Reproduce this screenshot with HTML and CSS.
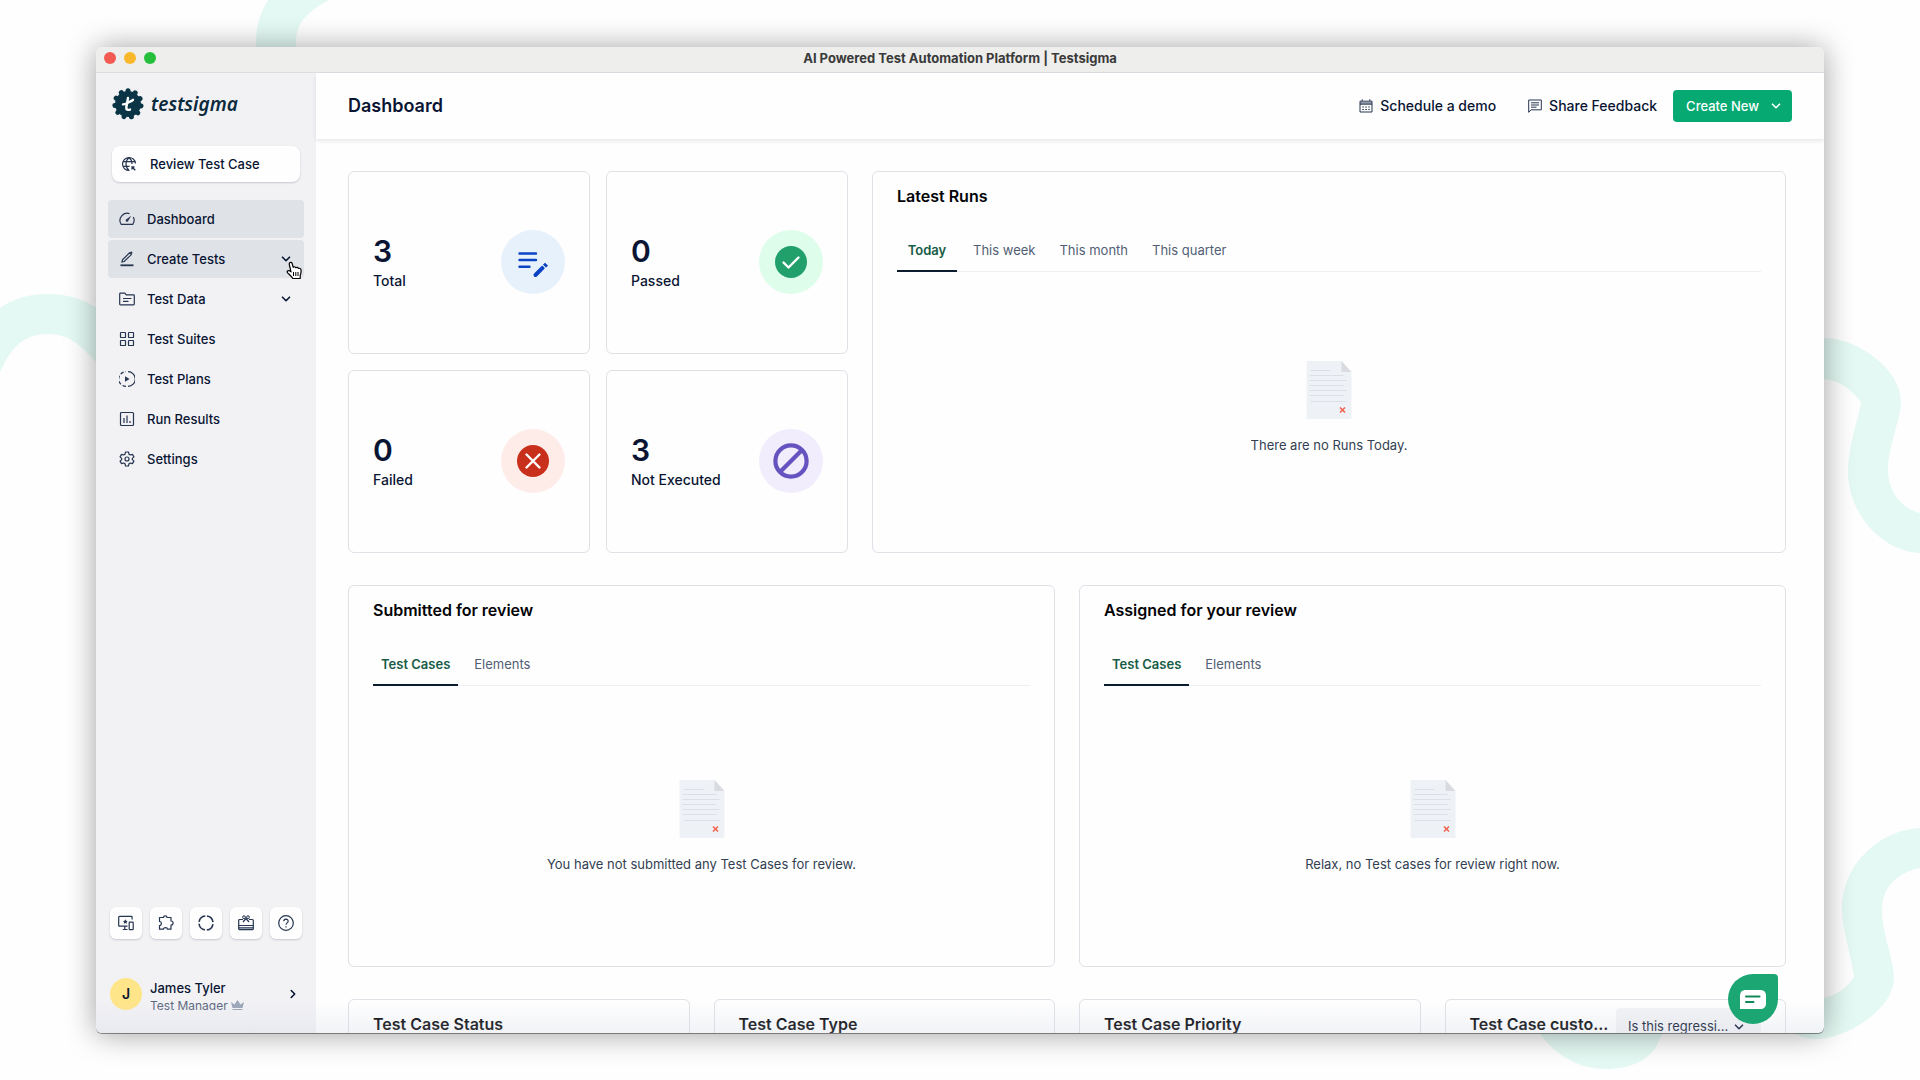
FILE: index.html
```html
<!DOCTYPE html>
<html lang="en">
<head>
    <meta charset="UTF-8">
    <meta name="viewport" content="width=device-width, initial-scale=1.0">
    <title>AI Powered Test Automation Platform | Testsigma</title>
    <link rel="stylesheet" href="styles.css">
</head>
<body>
    <!-- Background ribbons -->
    <svg class="ribbons" viewBox="0 0 1920 1080" preserveAspectRatio="none" aria-hidden="true">
        <path d="M0 308C14 298 31 294 48 294C68 294 84 299 100 310V365C84 352 75 334 48 334C22 334 10 350 0 372Z"/>
        <path d="M256 60V42C256 26 260 13 268 0H329C312 9 296 20 296 42V60Z"/>
        <path d="M1810 338H1824C1858 338 1901 370 1901 401C1901 420 1888 445 1888 470C1888 490 1900 508 1920 513V553C1880 551 1848 512 1848 472C1848 448 1858 420 1861 402C1850 388 1838 380 1824 379H1810Z"/>
        <path d="M1920 828C1880 830 1842 864 1842 909C1842 928 1850 950 1854 977C1846 989 1836 995 1824 998L1790 1030C1799 1037 1808 1039 1818 1039C1846 1039 1894 1009 1894 978C1894 960 1882 934 1882 910C1882 886 1899 872 1920 868Z"/>
        <path d="M1535 1025C1549 1052 1577 1069 1605 1069C1632 1069 1651 1059 1658 1043C1660 1038 1663 1033 1666 1025Z"/>
    </svg>

    <!-- Shared drawings -->
    <svg class="symbols" aria-hidden="true">
        <symbol id="empty-doc" viewBox="0 0 45 58">
            <path d="M0 0H35L45 11V58H0Z" fill="#eef1f5"/>
            <path d="M35 0L45 11H35Z" fill="#d9dbe0"/>
            <g stroke="#dcdfe5" stroke-width="1">
                <path d="M4 9.500H24M3 14.500H37M3 19.500H40M3 24.500H37M3 29.500H40M3 34.500H37M4 40.500H40"/>
            </g>
            <path d="M33.500 46.500L38.500 51.500M38.500 46.500L33.500 51.500" stroke="#f0604d" stroke-width="1.500"/>
        </symbol>
        <symbol id="chevron" viewBox="0 0 10 10">
            <path d="M1.500 3.200L5 6.700L8.500 3.200" fill="none" stroke="currentColor" stroke-width="1.600" stroke-linecap="round" stroke-linejoin="round"/>
        </symbol>
    </svg>

    <div class="window">
        <div class="titlebar">
            <div class="lights">
                <span class="light light-red"></span>
                <span class="light light-yellow"></span>
                <span class="light light-green"></span>
            </div>
            <div class="window-title">AI Powered Test Automation Platform | Testsigma</div>
        </div>

        <div class="app">
            <!-- Sidebar -->
            <aside class="sidebar">
                <a class="logo" href="#">
                    <svg width="32" height="32" viewBox="0 0 32 32">
                        <circle cx="16" cy="16" r="13" fill="#0b3547"/>
                        <circle cx="16" cy="16" r="13.200" fill="none" stroke="#0b3547" stroke-width="5" stroke-linecap="round" stroke-dasharray="0.010 7.530" transform="rotate(-90 16 16)"/>
                        <path d="M16 10L15.200 14.500L14.300 19.500C14.100 21.800 16 22.200 18 21.600M11 16.400C14 16.600 16 14.600 17.500 13.800C19 13.200 20 12.800 21 11.800" fill="none" stroke="#fff" stroke-width="2.400" stroke-linecap="round"/>
                    </svg>
                    <span class="logo-name">testsigma</span>
                </a>

                <button class="review-btn" type="button">
                    <svg class="icon" viewBox="0 0 16 16">
                        <path d="M14.500 7.500A6.500 6.500 0 1 0 8.500 14.500M1.700 5.700H14.200M1.700 10.300H8.500M8 1.500C4 5 4 11 8 14.500M8 1.500C10.200 3.300 11 5.500 11 8"/>
                        <path d="M11 13.500V11H13.500M11.300 11.300L14.300 14.300" stroke-width="1.300"/>
                    </svg>
                    Review Test Case
                </button>

                <nav class="nav">
                    <a class="nav-item active" href="#">
                        <svg class="icon" viewBox="0 0 16 16"><path d="M10.500 2.600A7.200 7.200 0 0 0 2.200 13.400H13.800A7.200 7.200 0 0 0 14.300 6"/><path d="M12.200 4.800L9 10.300A1.300 1.300 0 0 1 7 8.600Z" fill="currentColor" stroke="none"/></svg>
                        <span>Dashboard</span>
                    </a>
                    <a class="nav-item active" href="#">
                        <svg class="icon" viewBox="0 0 16 16"><path d="M1.500 14.300H14.500" stroke-width="1.800"/><path d="M3 11L3.500 8.800L10.500 1.800L12.300 3.600L5.200 10.500Z"/><path d="M11.500 1L13 2.500" stroke-width="2"/></svg>
                        <span>Create Tests</span>
                        <svg class="chevron" viewBox="0 0 10 10"><use href="#chevron"/></svg>
                    </a>
                    <a class="nav-item" href="#">
                        <svg class="icon" viewBox="0 0 16 16"><path d="M.7 13V3C.7 2.500 1 2.200 1.500 2.200H5.800L7.300 3.800H14.500C15 3.800 15.300 4.100 15.300 4.600V13C15.300 13.500 15 13.800 14.500 13.800H1.500C1 13.800 .7 13.500 .7 13ZM4 7.500H12.500M4 10.300H9.500"/></svg>
                        <span>Test Data</span>
                        <svg class="chevron" viewBox="0 0 10 10"><use href="#chevron"/></svg>
                    </a>
                    <a class="nav-item" href="#">
                        <svg class="icon" viewBox="0 0 16 16"><rect x="1.500" y="1.500" width="5" height="5" rx=".6"/><rect x="9.500" y="1.500" width="5" height="5" rx=".6"/><rect x="1.500" y="9.500" width="5" height="5" rx=".6"/><rect x="9.500" y="9.500" width="5" height="5" rx=".6"/></svg>
                        <span>Test Suites</span>
                    </a>
                    <a class="nav-item" href="#">
                        <svg class="icon" viewBox="0 0 16 16"><path d="M9 .7A7.300 7.300 0 0 1 9 15.300"/><path d="M7 15.300A7.300 7.300 0 0 1 7 .7" stroke-dasharray="3.600 2"/><path d="M6 5.200L10.600 8L6 10.800Z" fill="currentColor" stroke="none"/></svg>
                        <span>Test Plans</span>
                    </a>
                    <a class="nav-item" href="#">
                        <svg class="icon" viewBox="0 0 16 16"><rect x="1.500" y="1.500" width="13" height="13" rx="1"/><path d="M5 7V12M8 4.500V12M11 10V12"/></svg>
                        <span>Run Results</span>
                    </a>
                    <a class="nav-item" href="#">
                        <svg class="icon" viewBox="0 0 24 24"><g stroke-width="1.800"><circle cx="12" cy="12" r="3"/><path d="M9.800 1.500H14.200L14.900 4.700L17.100 6L20.200 5L22.400 8.800L20 11V13L22.400 15.200L20.200 19L17.100 18L14.900 19.300L14.200 22.500H9.800L9.100 19.300L6.900 18L3.800 19L1.600 15.200L4 13V11L1.600 8.800L3.800 5L6.900 6L9.100 4.700Z" stroke-linejoin="round"/></g></svg>
                        <span>Settings</span>
                    </a>
                </nav>

                <div class="tools">
                    <button class="tool" type="button" aria-label="Devices">
                        <svg class="icon" viewBox="0 0 16 16"><path d="M9.500 11.200H1.500C1 11.200 .7 10.900 .7 10.400V2.200C.7 1.700 1 1.400 1.500 1.400H13.300C13.800 1.400 14.100 1.700 14.100 2.200V4.500M6.800 11.200V14.300M4.800 14.500H9.500"/><rect x="11.200" y="7.200" width="4" height="7.500" rx=".6"/><path d="M7.300 4.200L8.100 5.800L9.800 6L8.500 7.100L8.900 8.800L7.300 7.900L5.800 8.800L6.100 7.100L4.900 6L6.600 5.800Z" fill="currentColor" stroke="none"/></svg>
                    </button>
                    <button class="tool" type="button" aria-label="Add-ons">
                        <svg class="icon" viewBox="0 0 16 16"><path d="M1.500 2.500H5.500C5.500 .3 9 .3 9 2.500H13V6C15.800 6 15.800 10 13 10V14.200H9.500C9.500 12 5.500 12 5.500 14.200H1.500V10.500C4 10.500 4 6.500 1.500 6.500Z" stroke-linejoin="round"/></svg>
                    </button>
                    <button class="tool" type="button" aria-label="Usage">
                        <svg class="icon" viewBox="0 0 16 16"><circle cx="8" cy="8" r="7" stroke-width="1.600" stroke-dasharray="9 2" transform="rotate(-82 8 8)"/></svg>
                    </button>
                    <button class="tool" type="button" aria-label="What's new">
                        <svg class="icon" viewBox="0 0 16 16"><path d="M5 4.500H1.700C1.100 4.500 .7 4.900 .7 5.500V13.700C.7 14.300 1.100 14.700 1.700 14.700H14.300C14.900 14.700 15.300 14.300 15.300 13.700V5.500C15.300 4.900 14.900 4.500 14.300 4.500H11"/><path d="M.7 10.500H15.300M.7 12.800H15.300"/><path d="M5 7L8 3.500L11 7"/><circle cx="6" cy="2.200" r="1.400" stroke-width="1"/><circle cx="10" cy="2.200" r="1.400" stroke-width="1"/></svg>
                    </button>
                    <button class="tool" type="button" aria-label="Help">
                        <svg class="icon" viewBox="0 0 16 16"><circle cx="8" cy="8" r="7.300"/><path d="M5.800 6.300C5.800 3.400 10.300 3.500 10.200 6.200C10.100 7.800 8 8 8 9.800M8 11.200V12.500"/></svg>
                    </button>
                </div>

                <a class="profile" href="#">
                    <span class="avatar">J</span>
                    <span class="profile-text">
                        <span class="profile-name">James Tyler</span>
                        <span class="profile-role">Test Manager
                            <svg width="13" height="10" viewBox="0 0 13 10"><path d="M0 2L3.500 4.500L6.500 0L9.500 4.500L13 2L11.500 8H1.500ZM1.500 9H11.500V10H1.500Z" fill="#9aa6b8"/></svg>
                        </span>
                    </span>
                    <svg class="chevron side" viewBox="0 0 10 10"><use href="#chevron"/></svg>
                </a>
            </aside>

            <!-- Main column -->
            <main class="main">
                <header class="header">
                    <h1>Dashboard</h1>
                    <div class="actions">
                        <a class="action" href="#">
                            <svg class="icon-sm" viewBox="0 0 14 14"><path d="M1 2.200H13V13H1ZM1 4H13M1 5.200H13M3.200 .3V2M10.800 .3V2"/><path d="M3.300 8H11M3.300 10.500H11" stroke-dasharray="1.500 1.500"/></svg>
                            Schedule a demo
                        </a>
                        <a class="action" href="#">
                            <svg class="icon-sm" viewBox="0 0 14 14"><path d="M.7 13.300V1H13.300V10.800H3ZM3 3.800H11M3 6H11M3 8.200H8.500"/></svg>
                            Share Feedback
                        </a>
                        <button class="create-btn" type="button">Create New
                            <svg class="chevron" viewBox="0 0 10 10"><use href="#chevron"/></svg>
                        </button>
                    </div>
                </header>

                <div class="content">
                    <!-- Counters and latest runs -->
                    <div class="row row-top">
                        <div class="stats">
                            <div class="card stat">
                                <div><div class="stat-value">3</div><div class="stat-label">Total</div></div>
                                <div class="stat-icon blue">
                                    <svg width="32" height="32" viewBox="0 0 32 32"><path d="M2.500 7.500H19M2.500 14H19M2.500 20.800H12.500" stroke="#0a44c4" stroke-width="2.400" stroke-linecap="round"/><path d="M18.500 29L25.800 21.700" stroke="#0a44c4" stroke-width="4" stroke-linecap="round"/><path d="M26 19.200L28 17.200L30.500 19.700L28.500 21.700Z" fill="#0a44c4" stroke="#0a44c4" stroke-linejoin="round"/><path d="M24.500 17.800L30 23.300" stroke="#e7f1fc" stroke-width="1.200"/></svg>
                                </div>
                            </div>
                            <div class="card stat">
                                <div><div class="stat-value">0</div><div class="stat-label">Passed</div></div>
                                <div class="stat-icon green">
                                    <svg width="32" height="32" viewBox="0 0 32 32"><circle cx="16" cy="16" r="16" fill="#22a06b"/><path d="M8.500 16.500L13.500 21.500L23.500 11.500" fill="none" stroke="#fff" stroke-width="2.400" stroke-linecap="round" stroke-linejoin="round"/></svg>
                                </div>
                            </div>
                            <div class="card stat">
                                <div><div class="stat-value">0</div><div class="stat-label">Failed</div></div>
                                <div class="stat-icon red">
                                    <svg width="32" height="32" viewBox="0 0 32 32"><circle cx="16" cy="16" r="16" fill="#c9301c"/><path d="M9.500 9.500L22.500 22.500M22.500 9.500L9.500 22.500" stroke="#fff" stroke-width="2.400" stroke-linecap="round"/></svg>
                                </div>
                            </div>
                            <div class="card stat">
                                <div><div class="stat-value">3</div><div class="stat-label">Not Executed</div></div>
                                <div class="stat-icon purple">
                                    <svg width="36" height="36" viewBox="0 0 36 36"><circle cx="18" cy="18" r="15.600" fill="none" stroke="#6554c0" stroke-width="4.200"/><path d="M7 29L29 7" stroke="#6554c0" stroke-width="4.200"/></svg>
                                </div>
                            </div>
                        </div>

                        <section class="card panel">
                            <h2>Latest Runs</h2>
                            <div class="tabs">
                                <button class="tab selected" type="button">Today</button>
                                <button class="tab" type="button">This week</button>
                                <button class="tab" type="button">This month</button>
                                <button class="tab" type="button">This quarter</button>
                            </div>
                            <div class="empty">
                                <svg width="46" height="58"><use href="#empty-doc"/></svg>
                                <p>There are no Runs Today.</p>
                            </div>
                        </section>
                    </div>

                    <!-- Reviews -->
                    <div class="row row-half">
                        <section class="card panel">
                            <h2>Submitted for review</h2>
                            <div class="tabs">
                                <button class="tab selected" type="button">Test Cases</button>
                                <button class="tab" type="button">Elements</button>
                            </div>
                            <div class="empty">
                                <svg width="46" height="58"><use href="#empty-doc"/></svg>
                                <p>You have not submitted any Test Cases for review.</p>
                            </div>
                        </section>
                        <section class="card panel">
                            <h2>Assigned for your review</h2>
                            <div class="tabs">
                                <button class="tab selected" type="button">Test Cases</button>
                                <button class="tab" type="button">Elements</button>
                            </div>
                            <div class="empty">
                                <svg width="46" height="58"><use href="#empty-doc"/></svg>
                                <p>Relax, no Test cases for review right now.</p>
                            </div>
                        </section>
                    </div>

                    <!-- Charts, cut off by the window -->
                    <div class="row row-quarter">
                        <section class="card chart"><h2>Test Case Status</h2></section>
                        <section class="card chart"><h2>Test Case Type</h2></section>
                        <section class="card chart"><h2>Test Case Priority</h2></section>
                        <section class="card chart">
                            <h2><label for="customField">Test Case custo...</label></h2>
                            <div class="select-wrap">
                                <select id="customField">
                                    <option>Is this regressi...</option>
                                </select>
                                <svg class="chevron" viewBox="0 0 10 10"><use href="#chevron"/></svg>
                            </div>
                        </section>
                    </div>
                </div>
            </main>
        </div>

        <button class="chat" type="button" aria-label="Open chat">
            <svg width="26" height="19" viewBox="0 0 26 19"><path d="M6 0H20C24 0 26 2 26 6V13C26 17 24 19 20 19H0V6C0 2 2 0 6 0Z" fill="#fff"/><path d="M6 6.500H19.500M6 12H13.500" stroke="#12895b" stroke-width="2" stroke-linecap="round"/></svg>
        </button>
    </div>

    <svg class="pointer" viewBox="0 0 17 19" aria-hidden="true">
        <path d="M3.500 2C4.300 .8 5.800 1.200 6.200 2.500L7.200 6.300C8 5.400 9.400 5.600 9.800 6.700C10.700 6 12 6.300 12.400 7.400C13.600 6.900 14.800 7.600 15 8.800C15.400 11 15 12.500 14.200 14.500V17.500H6.800C6 15.500 3.300 13.500 1.600 11.800C.5 10.500 2 9 3.500 9.800L5 10.800L3.400 4C3.200 3.200 3.200 2.600 3.500 2Z" fill="#fff" stroke="#000" stroke-width="1.200" stroke-linejoin="round"/>
        <path d="M7.500 11V15M9.800 11V15M12 11V15" stroke="#000"/>
    </svg>
</body>
</html>
```

FILE: styles.css
```css
* {
    box-sizing: border-box;
}
body {
    margin: 0;
    height: 100vh;
    padding: 47px 5%;
    overflow: hidden;
    position: relative;
    background: #fdfefd;
    color: #0a1533;
    font-family: Inter, "Liberation Sans", sans-serif;
    font-size: 13px;
    line-height: 18px;
}
a {
    color: inherit;
    text-decoration: none;
}
button, select {
    font: inherit;
    color: inherit;
    border: none;
    cursor: pointer;
}
h1, h2, p {
    margin: 0;
}

/* Background */
.ribbons {
    position: absolute;
    top: 0;
    left: 0;
    width: 100%;
    height: 100%;
    fill: #e4f9f3;
}
.symbols {
    position: absolute;
    width: 0;
    height: 0;
}

/* Window frame */
.window {
    position: relative;
    height: 100%;
    display: flex;
    flex-direction: column;
    overflow: hidden;
    border-radius: 6px;
    background: #fefefe;
    box-shadow: 0 1px 0 rgba(0, 0, 0, 0.4), 0 1px 30px rgba(0, 0, 0, 0.38);
}
.window::after {
    content: "";
    position: absolute;
    left: 0;
    right: 0;
    bottom: 0;
    height: 32px;
    background: linear-gradient(rgba(205, 210, 225, 0), rgba(205, 210, 225, 0.25));
    pointer-events: none;
}
.titlebar {
    display: grid;
    grid-template-columns: 1fr auto 1fr;
    align-items: center;
    flex: none;
    height: 26px;
    padding: 0 8px 4px;
    background: #eeeeec;
    border-bottom: 1px solid #dcdce2;
}
.lights {
    display: flex;
    gap: 8px;
}
.light {
    width: 12px;
    height: 12px;
    border-radius: 50%;
}
.light-red { background: #f25a52; }
.light-yellow { background: #f9b82c; }
.light-green { background: #25bf3c; }
.window-title {
    font-weight: 700;
    color: #3a3a3a;
}
.app {
    flex: 1;
    display: flex;
    min-height: 0;
}

/* Icons */
.icon, .icon-sm {
    flex: none;
    width: 16px;
    height: 16px;
    fill: none;
    stroke: currentColor;
    stroke-width: 1.2;
    color: #263550;
}
.icon-sm {
    width: 14px;
    height: 14px;
    stroke-width: 1;
}
.chevron {
    flex: none;
    width: 10px;
    height: 10px;
}

/* Sidebar */
.sidebar {
    flex: none;
    width: 220px;
    display: flex;
    flex-direction: column;
    background: #f2f2f5;
    font-weight: 500;
}
.logo {
    display: flex;
    align-items: center;
    gap: 7px;
    padding: 15px 16px 0;
    color: #0b2a3c;
}
.logo-name {
    font: italic 600 19px/28px "Noto Sans", sans-serif;
}
.review-btn {
    display: flex;
    align-items: center;
    gap: 13px;
    height: 36px;
    margin: 26px 16px 18px;
    padding: 0 9px;
    border-radius: 8px;
    background: #fefefe;
    box-shadow: 0 1px 2px rgba(20, 30, 60, 0.2);
    font-weight: 500;
}
.nav {
    display: flex;
    flex-direction: column;
    gap: 2px;
    padding: 0 12px;
}
.nav-item {
    display: flex;
    align-items: center;
    gap: 12px;
    height: 38px;
    padding: 0 13px 0 11px;
    border-radius: 4px;
}
.nav-item.active {
    background: #dfe2e6;
}
.nav-item .chevron {
    margin-left: auto;
}
.tools {
    display: flex;
    gap: 8px;
    margin-top: auto;
    padding: 0 14px;
}
.tool {
    display: flex;
    align-items: center;
    justify-content: center;
    width: 32px;
    height: 32px;
    padding: 0;
    border-radius: 6px;
    background: #fefefe;
    box-shadow: 0 1px 2px rgba(20, 30, 60, 0.2);
}
.profile {
    display: flex;
    align-items: center;
    gap: 8px;
    height: 32px;
    margin: 39px 18px 23px 14px;
}
.profile .chevron {
    margin-left: auto;
}
.side {
    transform: rotate(-90deg);
}
.avatar {
    width: 32px;
    height: 32px;
    border-radius: 50%;
    background: #ffe58a;
    font-size: 14px;
    line-height: 32px;
    text-align: center;
    font-weight: 600;
}
.profile-text {
    display: flex;
    flex-direction: column;
    height: 32px;
    padding-top: 1px;
    overflow: hidden;
}
.profile-role {
    flex: none;
    font-size: 12px;
    font-weight: 400;
    color: #5c6880;
}

/* Header */
.main {
    flex: 1;
    min-width: 0;
    display: flex;
    flex-direction: column;
}
.header {
    display: flex;
    align-items: center;
    justify-content: space-between;
    flex: none;
    height: 66px;
    padding: 0 32px;
    box-shadow: 0 2px 4px rgba(20, 30, 60, 0.1);
}
.header h1 {
    font-size: 18px;
    line-height: 24px;
    font-weight: 600;
}
.actions {
    display: flex;
    align-items: center;
}
.action {
    display: flex;
    align-items: center;
    gap: 7px;
    font-size: 14px;
    font-weight: 500;
    margin-right: 32px;
}
.action + .action {
    margin-right: 16px;
}
.create-btn {
    display: flex;
    align-items: center;
    gap: 12px;
    height: 32px;
    padding: 0 11px 0 13px;
    border-radius: 4px;
    background: #06a972;
    color: #fff;
    font-weight: 500;
}

/* Content */
.content {
    flex: 1;
    min-height: 0;
    overflow: hidden;
    display: flex;
    flex-direction: column;
    gap: 32px;
    padding: 32px 38px 0 32px;
}
.row {
    display: grid;
    flex: none;
    gap: 24px;
}
.row-top {
    grid-template-columns: 500px 1fr;
}
.row-half {
    grid-template-columns: 1fr 1fr;
}
.row-quarter {
    grid-template-columns: repeat(4, minmax(0, 1fr));
}
.card {
    border: 1px solid #dfe1e7;
    border-radius: 6px;
    background: #fefefe;
}
.stats {
    display: grid;
    grid-template-columns: 1fr 1fr;
    gap: 16px;
}
.stat {
    display: flex;
    align-items: center;
    justify-content: space-between;
    padding: 0 24px 2px;
}
.stat-value {
    font-size: 30px;
    line-height: 38px;
    font-weight: 600;
}
.stat-label {
    font-size: 14px;
    line-height: 22px;
    font-weight: 500;
}
.stat-icon {
    display: flex;
    align-items: center;
    justify-content: center;
    width: 64px;
    height: 64px;
    border-radius: 50%;
}
.blue { background: #e7f1fc; }
.green { background: #dffdeb; }
.red { background: #feece9; }
.purple { background: #f1edfc; }

/* Panels with tabs */
.panel {
    display: flex;
    flex-direction: column;
    height: 382px;
    padding: 0 24px;
}
.panel h2, .chart h2 {
    font-size: 16px;
    line-height: 24px;
    font-weight: 600;
    color: #020306;
}
.panel h2 {
    margin: 12px 0 22px;
}
.tabs {
    display: flex;
    gap: 8px;
    border-bottom: 1px solid #eeeff2;
}
.tab {
    min-width: 60px;
    height: 42px;
    margin-bottom: -1px;
    padding: 0 8px;
    background: none;
    border-bottom: 2px solid transparent;
    color: #525e75;
}
.tab.selected {
    color: #175c46;
    font-weight: 600;
    border-bottom-color: #0d1b2e;
}
.empty {
    flex: 1;
    display: flex;
    flex-direction: column;
    align-items: center;
    justify-content: center;
    gap: 17px;
    padding-bottom: 10px;
    color: #333f52;
}
.row-half .empty {
    padding-bottom: 0;
}

/* Charts */
.chart {
    display: flex;
    justify-content: space-between;
    height: 320px;
    padding: 8px 24px;
}
.chart h2 {
    margin-top: 4px;
    white-space: nowrap;
}
.select-wrap {
    position: relative;
    width: 145px;
}
.select-wrap select {
    width: 100%;
    height: 36px;
    padding: 0 12px;
    appearance: none;
    border-radius: 4px;
    background: #f2f3f5;
}
.select-wrap .chevron {
    position: absolute;
    right: 17px;
    top: 14px;
}

/* Floating items */
.chat {
    position: absolute;
    z-index: 1;
    right: 46px;
    bottom: 9px;
    display: flex;
    align-items: center;
    justify-content: center;
    width: 50px;
    height: 50px;
    padding: 0;
    border-radius: 50% 4px 50% 50%;
    background: #1ca673;
}
.pointer {
    position: absolute;
    top: 261px;
    left: 286px;
    width: 17px;
    height: 19px;
}
```
